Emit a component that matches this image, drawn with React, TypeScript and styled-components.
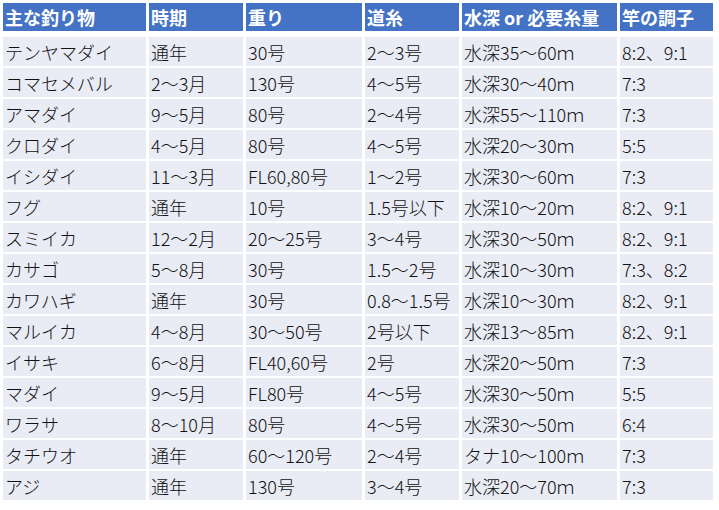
import React from "react";
import styled, { createGlobalStyle } from "styled-components";

const GlobalStyle = createGlobalStyle`
  html, body {
    margin: 0;
    padding: 0;
    background: #ffffff;
  }
  body {
    font-family: "Noto Sans CJK JP", "Noto Sans", sans-serif;
  }
`;

const TableWrapper = styled.div`
  display: flex;
  flex-direction: column;
  gap: 2px;
  padding: 3px;
  width: 713px;
`;

const Row = styled.div<{ $head?: boolean }>`
  display: grid;
  grid-template-columns: 143px 94px 116px 94px 155px 93px;
  column-gap: 3px;
  height: ${(p) => (p.$head ? "28px" : "29px")};
  margin-bottom: ${(p) => (p.$head ? "4px" : "0")};
`;

const Cell = styled.div<{ $head?: boolean }>`
  display: flex;
  align-items: center;
  padding-left: 2px;
  background: ${(p) => (p.$head ? "#4472c4" : "#e9ebf5")};
  color: ${(p) => (p.$head ? "#ffffff" : "#111111")};
  font-size: 18px;
  font-weight: ${(p) => (p.$head ? 700 : 300)};
  line-height: 1;
  white-space: nowrap;
  overflow: hidden;
`;

const headers = ["主な釣り物", "時期", "重り", "道糸", "水深 or 必要糸量", "竿の調子"];

const rows: string[][] = [
  ["テンヤマダイ", "通年", "30号", "2〜3号", "水深35〜60ｍ", "8:2、9:1"],
  ["コマセメバル", "2〜3月", "130号", "4〜5号", "水深30〜40ｍ", "7:3"],
  ["アマダイ", "9〜5月", "80号", "2〜4号", "水深55〜110ｍ", "7:3"],
  ["クロダイ", "4〜5月", "80号", "4〜5号", "水深20〜30ｍ", "5:5"],
  ["イシダイ", "11〜3月", "FL60,80号", "1〜2号", "水深30〜60ｍ", "7:3"],
  ["フグ", "通年", "10号", "1.5号以下", "水深10〜20ｍ", "8:2、9:1"],
  ["スミイカ", "12〜2月", "20〜25号", "3〜4号", "水深30〜50ｍ", "8:2、9:1"],
  ["カサゴ", "5〜8月", "30号", "1.5〜2号", "水深10〜30ｍ", "7:3、8:2"],
  ["カワハギ", "通年", "30号", "0.8〜1.5号", "水深10〜30ｍ", "8:2、9:1"],
  ["マルイカ", "4〜8月", "30〜50号", "2号以下", "水深13〜85ｍ", "8:2、9:1"],
  ["イサキ", "6〜8月", "FL40,60号", "2号", "水深20〜50ｍ", "7:3"],
  ["マダイ", "9〜5月", "FL80号", "4〜5号", "水深30〜50ｍ", "5:5"],
  ["ワラサ", "8〜10月", "80号", "4〜5号", "水深30〜50ｍ", "6:4"],
  ["タチウオ", "通年", "60〜120号", "2〜4号", "タナ10〜100ｍ", "7:3"],
  ["アジ", "通年", "130号", "3〜4号", "水深20〜70ｍ", "7:3"],
];

export default function App() {
  return (
    <>
      <GlobalStyle />
      <TableWrapper>
        <Row $head>
          {headers.map((h) => (
            <Cell $head key={h}>
              {h}
            </Cell>
          ))}
        </Row>
        {rows.map((r) => (
          <Row key={r[0]}>
            {r.map((c, i) => (
              <Cell key={i}>{c}</Cell>
            ))}
          </Row>
        ))}
      </TableWrapper>
    </>
  );
}
